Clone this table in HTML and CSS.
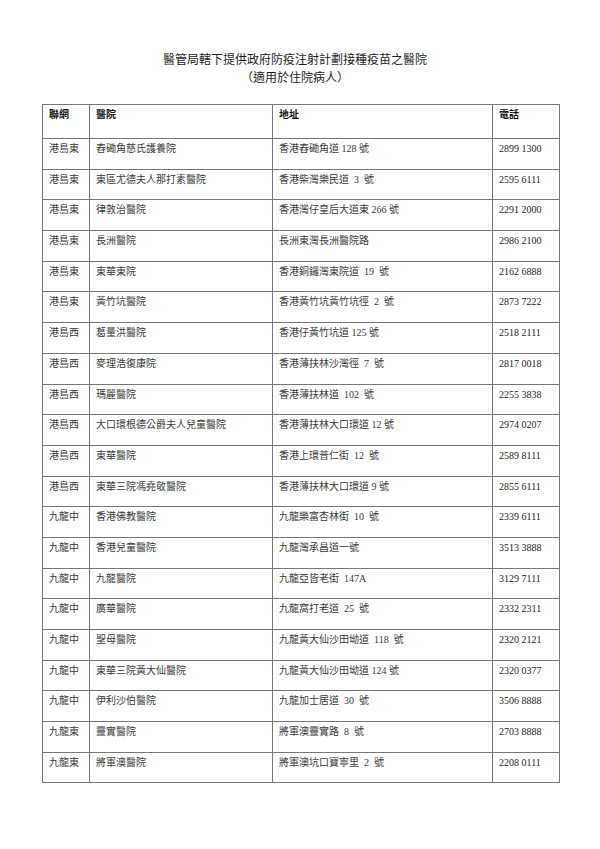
FILE: index.html
```html
<!DOCTYPE html>
<html lang="zh-Hant">
<head>
<meta charset="utf-8">
<title>醫管局轄下提供政府防疫注射計劃接種疫苗之醫院</title>
<link rel="stylesheet" href="styles.css">
</head>
<body>
<div class="page">
  <header class="title">
    <div class="title-line">醫管局轄下提供政府防疫注射計劃接種疫苗之醫院</div>
    <div class="title-line">（適用於住院病人）</div>
  </header>
  <table class="list">
    <colgroup>
      <col class="c-net"><col class="c-hosp"><col class="c-addr"><col class="c-tel">
    </colgroup>
    <thead>
      <tr class="head"><th>聯網</th><th>醫院</th><th>地址</th><th>電話</th></tr>
    </thead>
    <tbody>
      <tr><td>港島東</td><td>舂磡角慈氏護養院</td><td>香港舂磡角道 128 號</td><td>2899 1300</td></tr>
      <tr><td>港島東</td><td>東區尤德夫人那打素醫院</td><td>香港柴灣樂民道&nbsp; 3&nbsp; 號</td><td>2595 6111</td></tr>
      <tr><td>港島東</td><td>律敦治醫院</td><td>香港灣仔皇后大道東 266 號</td><td>2291 2000</td></tr>
      <tr><td>港島東</td><td>長洲醫院</td><td>長洲東灣長洲醫院路</td><td>2986 2100</td></tr>
      <tr><td>港島東</td><td>東華東院</td><td>香港銅鑼灣東院道&nbsp; 19&nbsp; 號</td><td>2162 6888</td></tr>
      <tr><td>港島東</td><td>黃竹坑醫院</td><td>香港黃竹坑黃竹坑徑&nbsp; 2&nbsp; 號</td><td>2873 7222</td></tr>
      <tr><td>港島西</td><td>葛量洪醫院</td><td>香港仔黃竹坑道 125 號</td><td>2518 2111</td></tr>
      <tr><td>港島西</td><td>麥理浩復康院</td><td>香港薄扶林沙灣徑&nbsp; 7&nbsp; 號</td><td>2817 0018</td></tr>
      <tr><td>港島西</td><td>瑪麗醫院</td><td>香港薄扶林道&nbsp; 102&nbsp; 號</td><td>2255 3838</td></tr>
      <tr><td>港島西</td><td>大口環根德公爵夫人兒童醫院</td><td>香港薄扶林大口環道 12 號</td><td>2974 0207</td></tr>
      <tr><td>港島西</td><td>東華醫院</td><td>香港上環普仁街&nbsp; 12&nbsp; 號</td><td>2589 8111</td></tr>
      <tr><td>港島西</td><td>東華三院馮堯敬醫院</td><td>香港薄扶林大口環道 9 號</td><td>2855 6111</td></tr>
      <tr><td>九龍中</td><td>香港佛教醫院</td><td>九龍樂富杏林街&nbsp; 10&nbsp; 號</td><td>2339 6111</td></tr>
      <tr><td>九龍中</td><td>香港兒童醫院</td><td>九龍灣承昌道一號</td><td>3513 3888</td></tr>
      <tr><td>九龍中</td><td>九龍醫院</td><td>九龍亞皆老街&nbsp; 147A</td><td>3129 7111</td></tr>
      <tr><td>九龍中</td><td>廣華醫院</td><td>九龍窩打老道&nbsp; 25&nbsp; 號</td><td>2332 2311</td></tr>
      <tr><td>九龍中</td><td>聖母醫院</td><td>九龍黃大仙沙田坳道&nbsp; 118&nbsp; 號</td><td>2320 2121</td></tr>
      <tr><td>九龍中</td><td>東華三院黃大仙醫院</td><td>九龍黃大仙沙田坳道 124 號</td><td>2320 0377</td></tr>
      <tr><td>九龍中</td><td>伊利沙伯醫院</td><td>九龍加士居道&nbsp; 30&nbsp; 號</td><td>3506 8888</td></tr>
      <tr><td>九龍東</td><td>靈實醫院</td><td>將軍澳靈實路&nbsp; 8&nbsp; 號</td><td>2703 8888</td></tr>
      <tr><td>九龍東</td><td>將軍澳醫院</td><td>將軍澳坑口寶寧里&nbsp; 2&nbsp; 號</td><td>2208 0111</td></tr>
    </tbody>
  </table>
</div>
</body>
</html>
```
FILE: styles.css
```css
html, body {
  margin: 0;
  padding: 0;
  background: #ffffff;
}

body {
  font-family: "Liberation Serif", "Noto Sans CJK TC", serif;
  color: #3a3a3a;
}

.page {
  width: 600px;
  padding-top: 51px;
}

.title {
  display: flex;
  flex-direction: column;
  align-items: center;
  padding-right: 10px;
  font-size: 12px;
  line-height: 18px;
  color: #1e1e1e;
}

.list {
  margin: 17px 0 0 42px;
  width: 517px;
  border-collapse: collapse;
  table-layout: fixed;
  font-size: 10px;
  line-height: 13px;
}

.c-net { width: 47px; }
.c-hosp { width: 183px; }
.c-addr { width: 220px; }
.c-tel { width: 67px; }

.list th,
.list td {
  border: 1px solid #777777;
  padding: 3px 5px 0 6px;
  vertical-align: top;
  text-align: left;
  white-space: nowrap;
  overflow: hidden;
}

.list th {
  font-weight: bold;
  color: #111111;
}

.list .head {
  height: 34px;
}

.list tbody tr {
  height: 30.7px;
}

.list td:last-child {
  color: #1e1e1e;
}
```
